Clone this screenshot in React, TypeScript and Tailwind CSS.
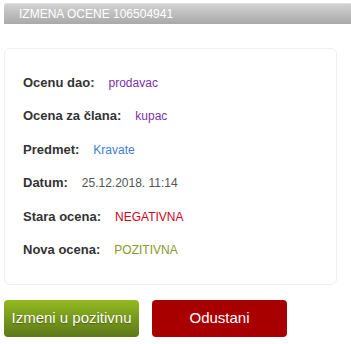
const rows: { label: string; value: string; color: string }[] = [
  { label: 'Ocenu dao:', value: 'prodavac', color: 'text-[#7a2fa8]' },
  { label: 'Ocena za člana:', value: 'kupac', color: 'text-[#7a2fa8]' },
  { label: 'Predmet:', value: 'Kravate', color: 'text-[#3d7fd6]' },
  { label: 'Datum:', value: '25.12.2018. 11:14', color: 'text-[#555555]' },
  { label: 'Stara ocena:', value: 'NEGATIVNA', color: 'text-[#d0021b]' },
  { label: 'Nova ocena:', value: 'POZITIVNA', color: 'text-[#8a982a]' },
];

export default function App() {
  return (
    <div className="w-[351px] h-[344px] bg-white pl-[4px] pt-[3px] overflow-hidden font-['Liberation_Sans',Arial,sans-serif]">
      {/* Title bar */}
      <div className="w-[347px] h-[21px] rounded-tl-[3px] bg-gradient-to-b from-[#d2d2d2] to-[#a9a9a9] border-t border-[#e2e2e2] flex items-center pl-[15px]">
        <span className="text-[12px] text-white leading-none">IZMENA OCENE 106504941</span>
      </div>

      {/* Details card */}
      <div className="mt-[24px] w-[333px] h-[237px] rounded-[6px] border border-[#efefef] pl-[18px] pt-[24px] flex flex-col">
        {rows.map((r) => (
          <div key={r.label} className="h-[33.4px] flex items-baseline gap-[14px]">
            <span className="text-[13px] font-bold text-[#333333]">{r.label}</span>
            <span className={`text-[12px] ${r.color}`}>{r.value}</span>
          </div>
        ))}
      </div>

      {/* Actions */}
      <div className="mt-[15px] flex gap-[13px]">
        <button className="w-[135px] h-[37px] rounded-[4px] bg-gradient-to-b from-[#93ba1f] to-[#5c7818] text-white text-[15px] [text-shadow:0_1px_1px_rgba(0,0,0,0.35)]">
          Izmeni u pozitivnu
        </button>
        <button className="w-[135px] h-[37px] rounded-[4px] bg-[#a80000] text-white text-[15px]">
          Odustani
        </button>
      </div>
    </div>
  );
}
